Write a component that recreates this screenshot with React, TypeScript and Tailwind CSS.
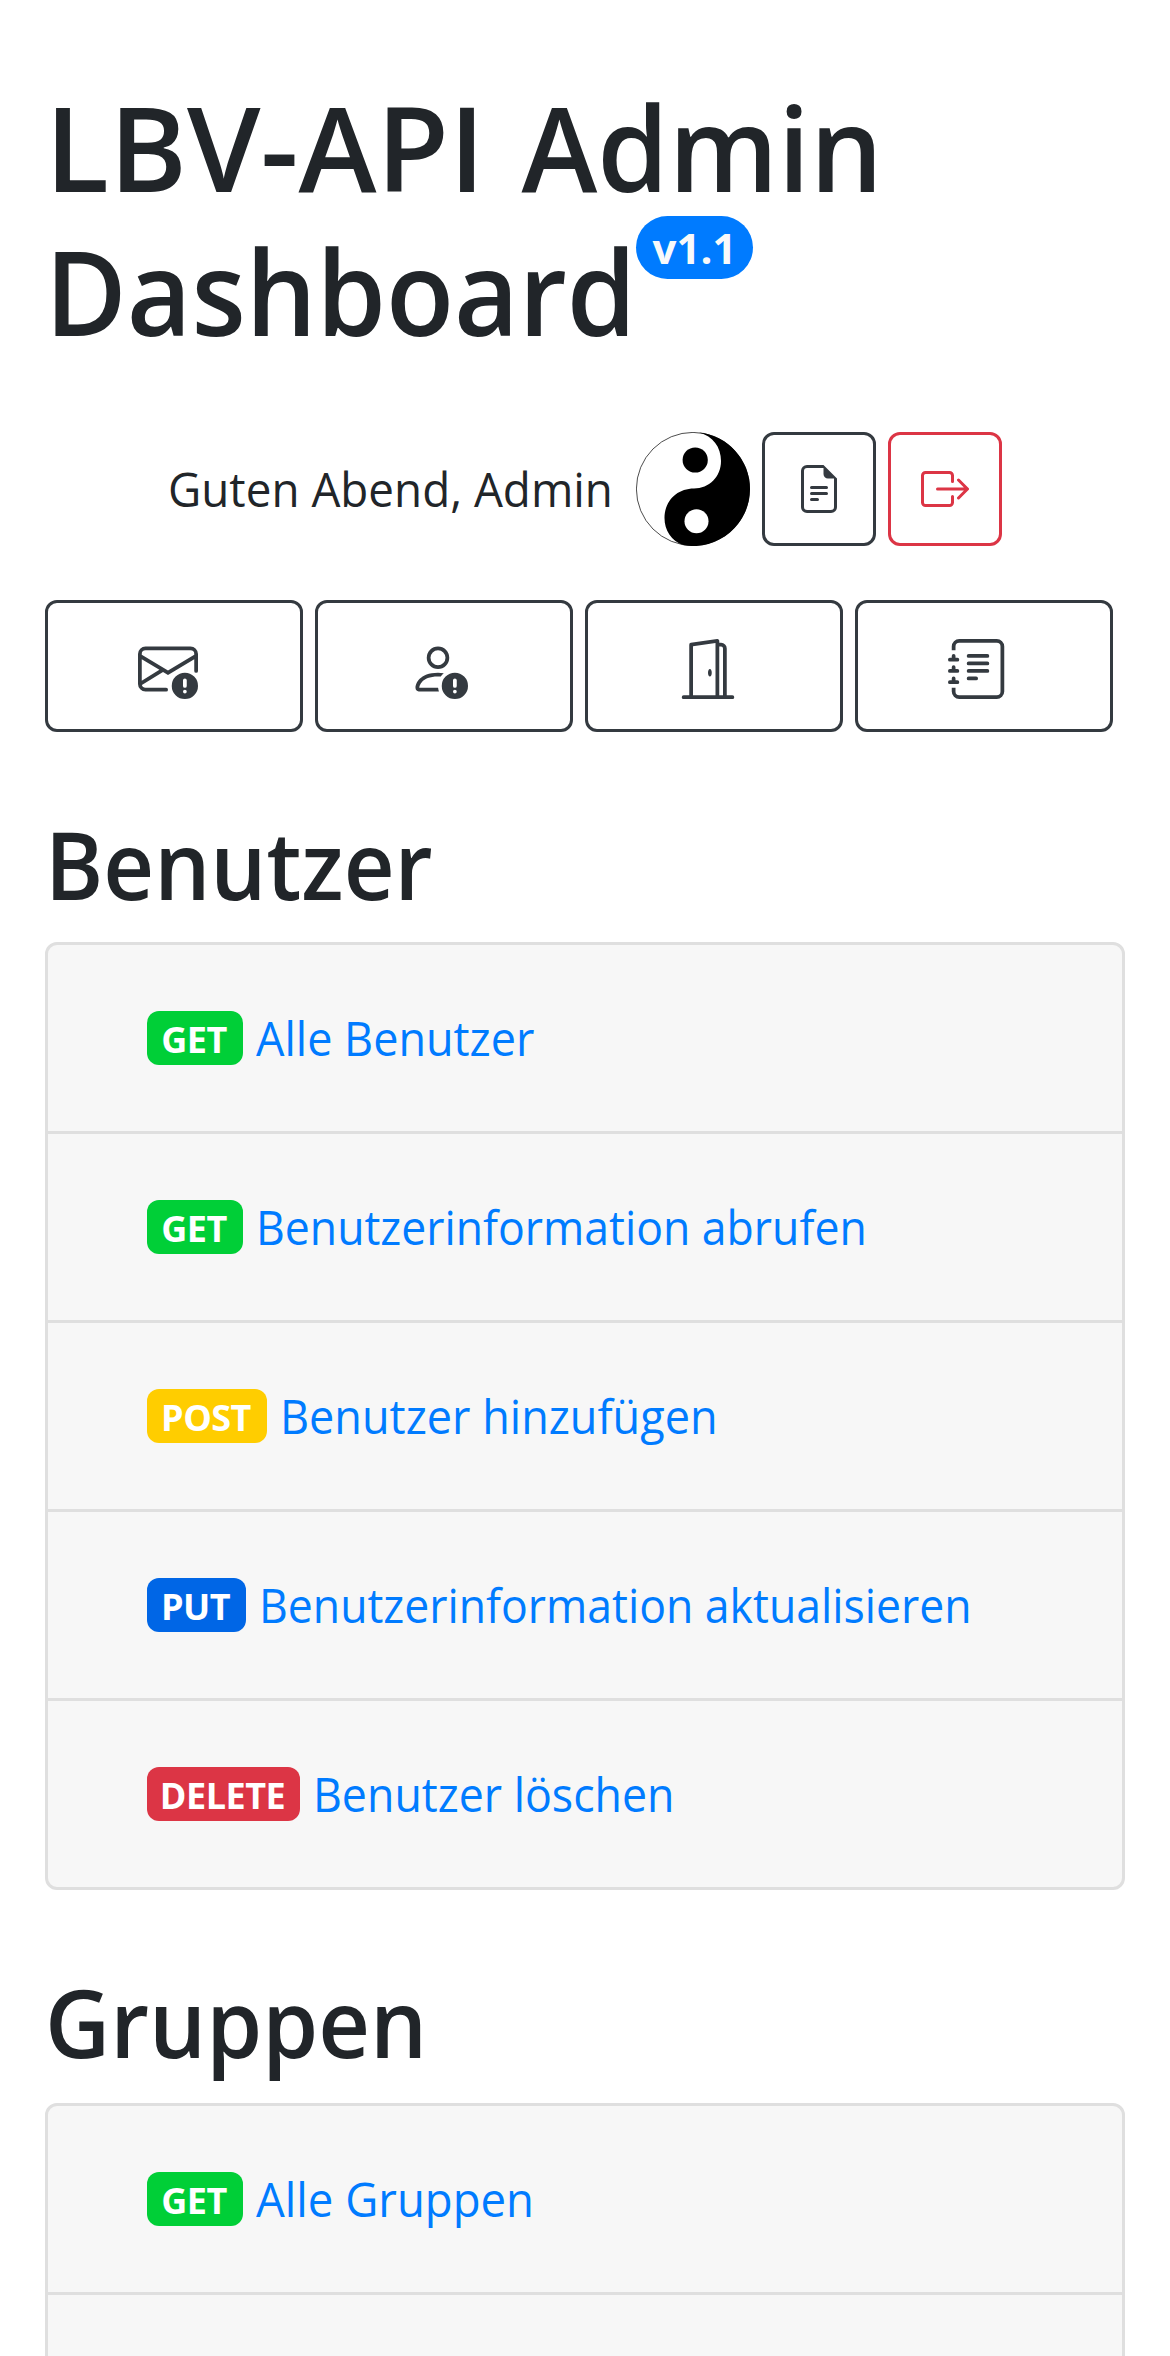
import type { ReactNode } from "react";
import {
  BsBoxArrowRight,
  BsDoorOpen,
  BsEnvelopeExclamation,
  BsFileEarmarkText,
  BsJournalText,
  BsPersonExclamation,
} from "react-icons/bs";

type Method = "GET" | "POST" | "PUT" | "DELETE";

type Endpoint = { method: Method; label: string; stretch: string };

const badgeStyles: Record<Method, string> = {
  GET: "w-24 bg-[#00cf37]",
  POST: "w-[120px] bg-[#ffcd00]",
  PUT: "w-[99px] bg-[#0066e6]",
  DELETE: "w-[153px] bg-[#dc3545]",
};

const userEndpoints: Endpoint[] = [
  { method: "GET", label: "Alle Benutzer", stretch: "scale-x-[0.947]" },
  { method: "GET", label: "Benutzerinformation abrufen", stretch: "scale-x-[0.938]" },
  { method: "POST", label: "Benutzer hinzufügen", stretch: "scale-x-[0.948]" },
  { method: "PUT", label: "Benutzerinformation aktualisieren", stretch: "scale-x-[0.938]" },
  { method: "DELETE", label: "Benutzer löschen", stretch: "scale-x-[0.941]" },
];

const groupEndpoints: Endpoint[] = [
  { method: "GET", label: "Alle Gruppen", stretch: "scale-x-[0.9585]" },
];

function YinYang() {
  return (
    <svg viewBox="0 0 114 114" className="size-[114px]">
      <circle cx="57" cy="57" r="56.6" fill="#fff" stroke="#000" strokeWidth="0.7" />
      <path d="M63 0.4C77 4 85 15 85 29C85 45 73 56.5 58 56.5C41 56.5 28.5 69 28.5 86C28.5 98 35 109 48 113.3A57 57 0 0 0 114 57A57 57 0 0 0 63 0.4Z" />
      <circle cx="59.2" cy="28" r="12.6" />
      <circle cx="60.5" cy="89.2" r="12" fill="#fff" />
    </svg>
  );
}

function SquareButton({ color, children }: { color: string; children: ReactNode }) {
  return (
    <button className={`flex size-[114px] items-center justify-center rounded-xl border-3 text-5xl ${color}`}>
      {children}
    </button>
  );
}

function WideButton({ children }: { children: ReactNode }) {
  return (
    <button className="flex h-[132px] w-[258px] items-center justify-center rounded-xl border-3 border-[#343a40] pt-1.5 pr-3 text-6xl text-[#343a40]">
      {children}
    </button>
  );
}

function Section({ title, heading, endpoints, more }: { title: string; heading: string; endpoints: Endpoint[]; more?: boolean }) {
  return (
    <section>
      <h2 className={`mt-[75px] origin-left text-[94px] leading-[115px] font-semibold ${heading}`}>{title}</h2>
      <ul className="divide-y-3 divide-[#dfdfdf] overflow-hidden rounded-xl border-3 border-[#dfdfdf] bg-[#f7f7f7]">
        {endpoints.map(({ method, label, stretch }) => (
          <li key={label} className="box-content flex h-[186px] items-center gap-[13px] pl-[99px]">
            <span
              className={`flex h-[54px] items-center justify-center rounded-xl pt-[3px] pr-0.5 text-[36px] leading-none font-bold tracking-[-0.5px] text-white ${badgeStyles[method]}`}
            >
              {method}
            </span>
            <a
              href="#"
              className={`origin-left text-[47.5px] leading-[72px] whitespace-nowrap text-[#007bff] ${stretch}`}
            >
              {label}
            </a>
          </li>
        ))}
        {more && <li className="box-content h-[186px]" />}
      </ul>
    </section>
  );
}

export default function App() {
  return (
    <main className="h-[2356px] overflow-hidden bg-white px-[45px] pt-[75px] font-['Open_Sans',sans-serif] text-[#212529]">
      <h1 className="text-[118px] leading-[144px] font-semibold">
        <span className="block whitespace-nowrap">
          LBV-API <span className="inline-block origin-right -translate-x-[5px] scale-x-[0.972]">Admin</span>
        </span>
        <span className="flex h-36 items-start">
          <span className="w-[591px]">
            <span className="block origin-left scale-x-[0.945]">Dashboard</span>
          </span>
          <span className="-mt-[3px] flex h-[63px] w-[117px] items-center justify-center rounded-full bg-[#007bff] text-[42px] leading-none font-bold text-[#f8f9fa]">
            v1.1
          </span>
        </span>
      </h1>

      <div className="mt-[69px] flex h-[114px] items-center justify-center">
        <div className="w-[468px]">
          <p className="origin-left scale-x-[0.964] text-[47.5px] leading-[72px] whitespace-nowrap">Guten Abend, Admin</p>
        </div>
        <div className="flex gap-3">
          <YinYang />
          <SquareButton color="border-[#343a40] text-[#343a40]">
            <BsFileEarmarkText />
          </SquareButton>
          <SquareButton color="border-[#dc3545] text-[#dc3545]">
            <BsBoxArrowRight />
          </SquareButton>
        </div>
      </div>

      <nav className="mt-[54px] flex gap-3">
        <WideButton>
          <BsEnvelopeExclamation />
        </WideButton>
        <WideButton>
          <BsPersonExclamation />
        </WideButton>
        <WideButton>
          <BsDoorOpen />
        </WideButton>
        <WideButton>
          <BsJournalText />
        </WideButton>
      </nav>

      <Section title="Benutzer" heading="mb-5 scale-x-[0.94]" endpoints={userEndpoints} />
      <Section title="Gruppen" heading="mb-[23px] scale-x-[0.957]" endpoints={groupEndpoints} more />
    </main>
  );
}
